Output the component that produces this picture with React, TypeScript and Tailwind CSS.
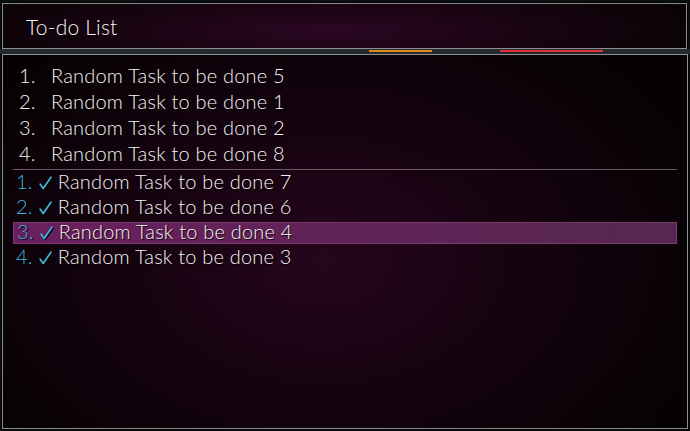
import React from 'react';

const openTasks = [
  'Random Task to be done 5',
  'Random Task to be done 1',
  'Random Task to be done 2',
  'Random Task to be done 8',
];

const doneTasks = [
  'Random Task to be done 7',
  'Random Task to be done 6',
  'Random Task to be done 4',
  'Random Task to be done 3',
];

const selectedDone = 2;

function Check() {
  return (
    <svg width="13" height="14" viewBox="0 0 13 14" className="ml-[6px] mr-[6px] mt-[3px] drop-shadow-[1px_1px_0_#000]">
      <path d="M1.2 8.2 L4.2 12.6 L12 1.2" fill="none" stroke="#3fb6dc" strokeWidth="1.7" strokeLinecap="round" strokeLinejoin="round" />
    </svg>
  );
}

export default function App() {
  return (
    <div className="w-[690px] h-[431px] bg-[#0c0d0e] flex flex-col overflow-hidden font-['Lato','Noto_Sans',sans-serif] text-[#f6f4f5] [text-shadow:1px_1px_1px_#000]">
      {/* Header */}
      <div className="mt-[3px] ml-[2px] mr-[3px] h-[46px] border border-[#8c8f92] shadow-[0_0_0_1px_#000] bg-[radial-gradient(ellipse_60%_120%_at_48%_60%,#2c0724_0%,#17040f_55%,#080305_100%)] flex items-center pl-[23px]">
        <span className="text-[21px] font-light tracking-[0.2px] leading-none">To-do List</span>
      </div>

      {/* strip of the game underneath */}
      <div className="h-[5px] bg-[#23292d] relative">
        <div className="absolute left-[369px] top-[1px] w-[63px] h-[2px] bg-[#e08a1c]" />
        <div className="absolute left-[500px] top-[1px] w-[103px] h-[2px] bg-[#e0323a]" />
      </div>

      {/* List panel */}
      <div className="flex-1 mb-[2px] ml-[2px] mr-[2px] border border-[#8c8f92] shadow-[0_0_0_1px_#000] bg-[radial-gradient(ellipse_60%_75%_at_47%_55%,#26061d_0%,#15030f_50%,#060203_100%)] pt-[8px] px-[10px]">
        {openTasks.map((t, i) => (
          <div key={t + i} className="h-[26px] flex items-center pb-[2px] text-[20px] font-light tracking-[0.2px]">
            <span className="w-[38px] pl-[6px]">{i + 1}.</span>
            <span>{t}</span>
          </div>
        ))}
        <div className="mt-[2px] h-px bg-[#6b5a66]" />
        {doneTasks.map((t, i) => (
          <div key={t + i} className="h-[25px] flex items-center text-[20px] font-light tracking-[0.2px]">
            <div
              className={
                'h-[22px] w-full flex items-center pl-[3px] pb-[3px] ' +
                (i === selectedDone
                  ? 'bg-[linear-gradient(90deg,#6b1f5f,#5e2456_60%,#56284f)] border border-[#7a3a6e]'
                  : '')
              }
            >
              <span className="text-[#3fb6dc]">{i + 1}.</span>
              <Check />
              <span>{t}</span>
            </div>
          </div>
        ))}
      </div>
    </div>
  );
}
